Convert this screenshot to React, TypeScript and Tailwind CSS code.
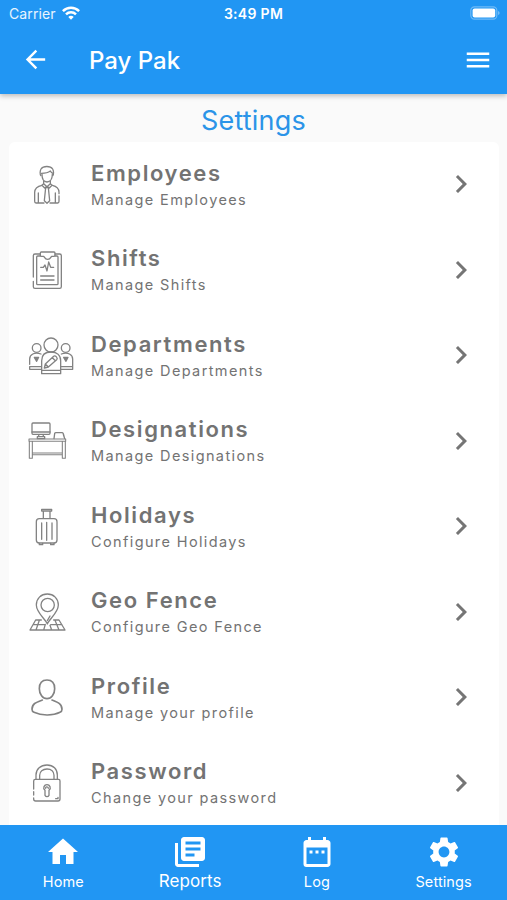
import type { ReactNode } from "react";
import {
  MdArrowBack,
  MdChevronRight,
  MdDateRange,
  MdHome,
  MdLibraryBooks,
  MdMenu,
  MdSettings,
} from "react-icons/md";

function LineIcon({ viewBox, children }: { viewBox: string; children: ReactNode }) {
  return (
    <svg
      viewBox={viewBox}
      className="size-[50px] shrink-0 overflow-visible"
      fill="none"
      stroke="#828282"
      strokeWidth="3.9"
      strokeLinecap="round"
      strokeLinejoin="round"
    >
      {children}
    </svg>
  );
}

const EmployeeIcon = () => (
  <LineIcon viewBox="21 14 150 150">
    <path d="M78 61c-4-4-3-15 0-20 7-10 28-10 35 0 3 5 4 16 0 20" />
    <path d="M79 54c14 0 22-3 27-7 2 4 4 5 7 7M81 57c0 14 6 23 15 23s16-9 16-23" />
    <path d="M86 77v8l10 9 10-9v-8M86 85l-5 5 8 8 7-5 7 5 8-8-5-5" />
    <path d="M81 90c-14 3-22 9-22 21v27c0 3 1 5 4 5h24M112 90c14 3 20 9 20 21v4M132 122v16c0 3-1 5-4 5h-23M70 113v30M121 113v30" />
    <path d="M92 97h8l4 39-8 8-8-8z" />
  </LineIcon>
);

const ShiftIcon = () => (
  <LineIcon viewBox="21 271 150 150">
    <path d="M76 298H60c-3 0-5 2-5 5v64M55 380v16c0 3 2 5 5 5h74c3 0 5-2 5-5v-93c0-3-2-5-5-5h-14" />
    <path d="M76 304H68c-2 0-3 1-3 3v80c0 2 1 3 3 3h58c2 0 3-1 3-3v-80c0-2-1-3-3-3h-6" />
    <path d="M79 292h38c2 0 3 1 3 3v7c0 2-1 3-3 3h-7c-2 0-3 9-12 9s-10-9-12-9h-7c-2 0-3-1-3-3v-7c0-2 1-3 3-3z" />
    <path d="M77 338h8l5-7 6 18 5-27 6 16h9M77 364h40M77 376h40" />
  </LineIcon>
);

const DepartmentIcon = () => (
  <LineIcon viewBox="21 32 150 150">
    <circle cx="108" cy="74" r="21" />
    <circle cx="65" cy="83" r="13" />
    <circle cx="152" cy="83" r="13" />
    <path d="M80 160v-39c0-17 11-26 28-26s29 9 29 26v39zM80 150h57" />
    <path d="M78 101c-20-7-34 2-34 15v16M44 139v8h35M44 139h35M139 101c20-7 34 2 34 15v31h-35M173 139h-35" />
    <path d="M58 111h13l-6 12zM61 111l4 6 4-6M146 111h13l-6 12zM149 111l4 6 4-6" />
    <path d="M88 143l3-12 25-23c5-4 14 5 9 10l-25 22zM91 131l9 9M112 112l9 9" />
  </LineIcon>
);

const DeskIcon = () => (
  <LineIcon viewBox="21 34 150 150">
    <rect x="51" y="55" width="54" height="34" rx="3" />
    <path d="M51 82h54M72 90l-2 6h-3v6h22v-6h-3l-2-6M70 96h16" />
    <path d="M117 102l2-15c0-2 1-3 3-3h19c2 0 3 1 4 3l4 15M145 90l4 12" />
    <path d="M42 103h110v7H42zM43 110v51h9v-51M142 110v51h9v-51M52 145h90M52 150h90" strokeWidth="3.2" />
  </LineIcon>
);

const LuggageIcon = () => (
  <LineIcon viewBox="21 35 150 150">
    <path d="M80 57h30v5H80zM85 62v22M105 62v22" />
    <rect x="64" y="85" width="62" height="73" rx="9" />
    <path d="M80 98v49M95 96v54M111 98v49" />
    <path d="M73 159v4h10v-4M107 159v4h10v-4" />
  </LineIcon>
);

const GeoIcon = () => (
  <LineIcon viewBox="21 22 150 150">
    <path d="M97 133c-5-14-33-34-33-57 0-19 14-33 33-33s33 14 33 33c0 23-28 43-33 57z" />
    <circle cx="98" cy="76" r="20" />
    <path d="M79 121H62l-17 30h105l-18-30h-16M55 135h35M107 135h34M73 122l-10 29M91 134l-5 17M120 122l12 29M105 137l5 14M97 123l8-14" />
  </LineIcon>
);

const ProfileIcon = () => (
  <LineIcon viewBox="21 24 150 150">
    <path
      d="M96 45c15 0 23 10 23 26 0 17-10 30-23 30S73 88 73 71c0-16 8-26 23-26zM82 105c-19 7-31 11-31 28 0 5 1 7 6 9 22 10 56 11 78 0 5-2 6-4 6-9 0-17-12-21-30-28"
      strokeWidth="5"
    />
  </LineIcon>
);

const LockIcon = () => (
  <LineIcon viewBox="21 25 150 150">
    <path d="M63 89V76c0-18 14-30 33-30s31 12 31 30v13M74 89V77c0-11 9-19 22-19s21 8 21 19v12" />
    <path d="M56 118V94c0-3 2-5 5-5h70c3 0 4 2 4 5v54c0 4-2 6-6 6H62c-4 0-6-2-6-6v-3M56 126v10M129 143v4h-7" />
    <path d="M90 122c-8-7-2-17 6-17s14 10 6 17v15c-3 5-9 5-12 0zM92 116c-2-5 8-6 8 0" />
  </LineIcon>
);

const items = [
  { title: "Employees", sub: "Manage Employees", Icon: EmployeeIcon },
  { title: "Shifts", sub: "Manage Shifts", Icon: ShiftIcon },
  { title: "Departments", sub: "Manage Departments", Icon: DepartmentIcon },
  { title: "Designations", sub: "Manage Designations", Icon: DeskIcon },
  { title: "Holidays", sub: "Configure Holidays", Icon: LuggageIcon },
  { title: "Geo Fence", sub: "Configure Geo Fence", Icon: GeoIcon },
  { title: "Profile", sub: "Manage your profile", Icon: ProfileIcon },
  { title: "Password", sub: "Change your password", Icon: LockIcon },
];

const tabs = [
  { label: "Home", Icon: MdHome, active: false },
  { label: "Reports", Icon: MdLibraryBooks, active: true },
  { label: "Log", Icon: MdDateRange, active: false },
  { label: "Settings", Icon: MdSettings, active: false },
];

function StatusBar() {
  return (
    <div className="grid h-[26px] grid-cols-3 items-center px-[9px] pt-[1px]">
      <div className="flex items-center gap-[6px] text-[14px] tracking-[0.1px] text-white/90">
        Carrier
        <svg viewBox="0 0 18 14" className="-mt-[2px] h-[14px] w-[18px]" fill="none" stroke="white" strokeWidth="2.5">
          <path d="M.9 5.1c4.6-4.5 11.6-4.5 16.2 0M4 8.3c2.8-2.7 7.2-2.7 10 0" />
          <path d="M9 13.8l-2.7-2.9c1.5-1.4 3.9-1.4 5.4 0z" fill="white" stroke="none" />
        </svg>
      </div>
      <div className="text-center text-[14px] font-semibold tracking-[0.3px] whitespace-nowrap">3:49 PM</div>
      <svg viewBox="0 0 30 14" className="-mt-[1px] -mr-[2px] h-[14px] w-[30px] justify-self-end">
        <rect x=".8" y=".8" width="26" height="12.4" rx="3.6" fill="none" stroke="white" strokeOpacity=".35" strokeWidth="1.2" />
        <rect x="2.6" y="2.5" width="22.6" height="9" rx="2" fill="white" />
        <path d="M28.2 5v4c1.8-.7 1.8-3.3 0-4z" fill="white" fillOpacity=".45" />
      </svg>
    </div>
  );
}

export default function App() {
  return (
    <div className="flex h-[900px] w-[507px] flex-col overflow-hidden bg-[#fafafa] font-['Inter','Liberation_Sans',sans-serif]">
      <header className="z-10 h-[94px] shrink-0 bg-[#2196f3] text-white shadow-[0_2px_5px_rgba(0,0,0,0.25)]">
        <StatusBar />
        <div className="flex h-[67px] items-center pr-[14px] pl-[21px]">
          <MdArrowBack className="size-[29px]" />
          <h1 className="ml-[39px] flex-1 pt-[2px] text-[24px] font-medium">Pay Pak</h1>
          <MdMenu className="size-[30px]" />
        </div>
      </header>
      <h2 className="flex h-[48px] shrink-0 items-center justify-center pt-[7px] text-[27px] tracking-[0.2px] text-[#2b94e8]">
        Settings
      </h2>
      <main className="mr-[8px] ml-[9px] min-h-0 flex-1 overflow-hidden rounded-t-[6px] bg-white">
        {items.map(({ title, sub, Icon }) => (
          <div key={title} className="flex h-[85.5px] items-center pr-[20.5px] pl-[13px]">
            <Icon />
            <div className="ml-[19px] flex-1 pt-[3px] text-[#737373]">
              <div className="text-[22px] leading-[27px] font-semibold tracking-[1.6px]">{title}</div>
              <div className="text-[14.5px] leading-[26px] tracking-[1.38px]">{sub}</div>
            </div>
            <MdChevronRight className="mb-[1px] size-[36px] text-[#757575]" />
          </div>
        ))}
      </main>
      <nav className="grid h-[75px] shrink-0 grid-cols-4 bg-[#2196f3] text-white">
        {tabs.map(({ label, Icon, active }) => (
          <div key={label} className="flex flex-col items-center pt-[9px]">
            <Icon className="size-[36px]" />
            <span
              className={
                active
                  ? "text-[17px] leading-[22px] tracking-[0.1px]"
                  : "mt-[1px] text-[14.5px] leading-[22px] tracking-[0.1px]"
              }
            >
              {label}
            </span>
          </div>
        ))}
      </nav>
    </div>
  );
}
